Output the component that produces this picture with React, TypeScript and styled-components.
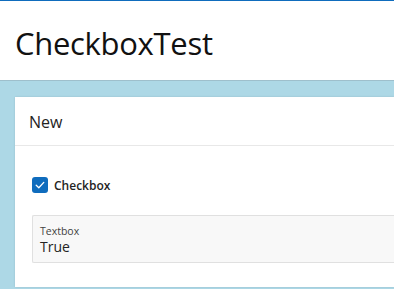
import React from "react";
import styled, { createGlobalStyle } from "styled-components";

const GlobalStyle = createGlobalStyle`
  html, body {
    margin: 0;
    padding: 0;
    width: 394px;
    height: 289px;
    overflow: hidden;
    background: #add8e6;
    font-family: "Open Sans", "Noto Sans", Arial, sans-serif;
  }
`;

const Page = styled.div`
  display: flex;
  flex-direction: column;
  width: 394px;
  height: 289px;
`;

const Header = styled.header`
  height: 81px;
  box-sizing: border-box;
  border-top: 1px solid #0f6cbd;
  border-bottom: 1px solid #9ebfcc;
  background: #ffffff;
  padding: 21px 0 0 15px;
`;

const Title = styled.h1`
  margin: 0;
  font-size: 31px;
  line-height: 42px;
  font-weight: 400;
  color: #111;
  letter-spacing: -0.3px;
`;

const Main = styled.main`
  flex: 1;
  padding: 16px 0 2px 15px;
  display: flex;
`;

const Card = styled.section`
  flex: 1;
  background: #ffffff;
  box-shadow: 0 0 2px rgba(0, 0, 0, 0.12);
  display: flex;
  flex-direction: column;
`;

const CardHeader = styled.div`
  height: 49px;
  box-sizing: border-box;
  border-bottom: 1px solid #e8e8e8;
  display: flex;
  align-items: center;
  padding: 2px 0 0 14px;
  font-size: 16px;
  color: #242424;
`;

const CardBody = styled.div`
  padding: 23px 0 0 17px;
  display: flex;
  flex-direction: column;
  gap: 14px;
`;

const CheckRow = styled.label`
  display: flex;
  align-items: center;
  gap: 6px;
  height: 32px;
  font-size: 12px;
  font-weight: 600;
  color: #242424;
`;

const Box = styled.span`
  width: 16px;
  height: 16px;
  border-radius: 3px;
  background: #0f6cbd;
  display: flex;
  align-items: center;
  justify-content: center;
`;

const Field = styled.div`
  height: 48px;
  box-sizing: border-box;
  border: 1px solid #e0e0e0;
  border-right: none;
  border-radius: 2px 0 0 2px;
  background: #f8f8f8;
  padding: 9px 0 0 7px;
  display: flex;
  flex-direction: column;
`;

const FieldLabel = styled.span`
  font-size: 10.5px;
  color: #424242;
  line-height: 13px;
`;

const FieldValue = styled.span`
  font-size: 14px;
  color: #242424;
  line-height: 18px;
`;

export default function App() {
  return (
    <>
      <GlobalStyle />
      <Page>
        <Header>
          <Title>CheckboxTest</Title>
        </Header>
        <Main>
          <Card>
            <CardHeader>New</CardHeader>
            <CardBody>
              <CheckRow>
                <Box>
                  <svg width="12" height="12" viewBox="0 0 12 12" fill="none">
                    <path d="M2.2 6.3 L4.8 8.8 L9.8 3.4" stroke="#fff" strokeWidth="1.3" strokeLinecap="round" strokeLinejoin="round" />
                  </svg>
                </Box>
                Checkbox
              </CheckRow>
              <Field>
                <FieldLabel>Textbox</FieldLabel>
                <FieldValue>True</FieldValue>
              </Field>
            </CardBody>
          </Card>
        </Main>
      </Page>
    </>
  );
}
